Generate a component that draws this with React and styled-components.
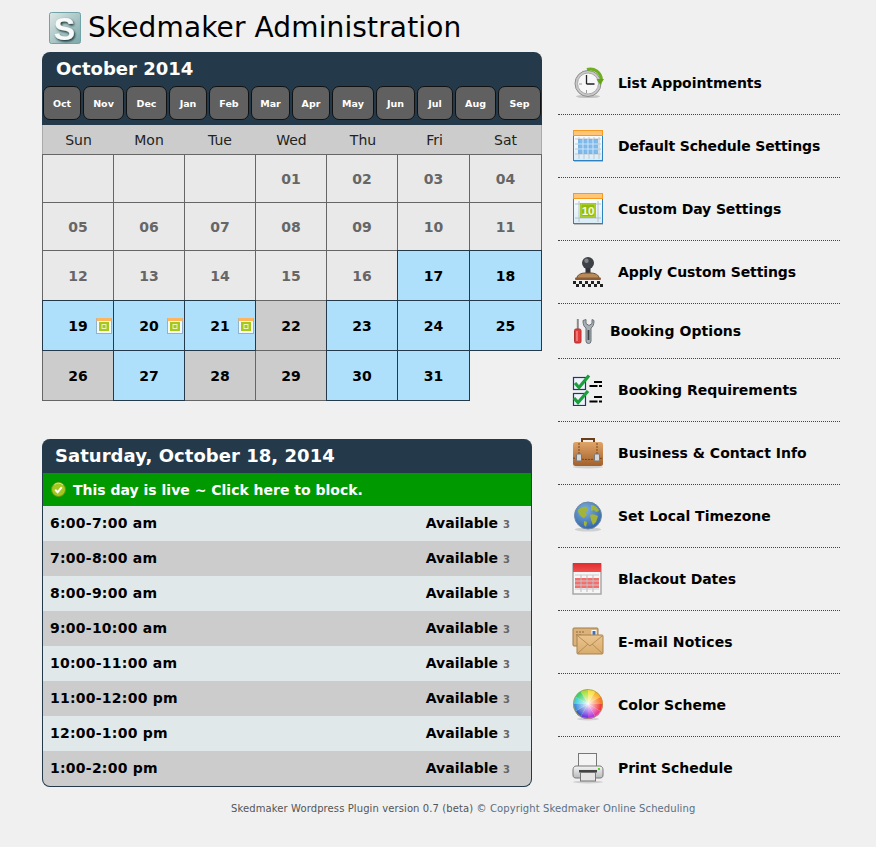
import React from "react";
import styled, { createGlobalStyle } from "styled-components";

const Global = createGlobalStyle`
  html, body { margin: 0; padding: 0; background: #f0f0f0; }
  body { font-family: "DejaVu Sans", Verdana, sans-serif; color: #000; }
`;
const Page = styled.div`
  width: 876px; height: 847px; box-sizing: border-box; padding: 9px 0 0 42px; overflow: hidden;
`;
const Columns = styled.div`display: flex; align-items: flex-start;`;
const LeftColumn = styled.div`width: 500px;`;
const TitleBar = styled.div`display: flex; align-items: center; gap: 7px; padding-left: 7px; height: 37px; margin-bottom: 6px;`;
const TitleText = styled.h1`margin: 0; font-size: 28px; font-weight: 400; line-height: 37px; color: #000; letter-spacing: .13px;`;
const Calendar = styled.div`width: 500px;`;
const CalendarHead = styled.div`
  background: #243a4a; border-radius: 8px 8px 0 0; height: 73px; box-sizing: border-box; padding: 6px 1px 0 1px;
`;
const MonthTitle = styled.div`
  font-size: 18px; font-weight: 700; color: #fff; line-height: 22px; padding-left: 13px; height: 28px;
`;
const MonthRow = styled.div`display: flex; gap: 2px;`;
const MonthButton = styled.div`
  width: ${p => p.$w}px; height: 34px; box-sizing: border-box; flex: none;
  background: #606060; border: 1px solid #111; border-radius: 7px;
  color: #fff; font-size: 9.5px; font-weight: 700; display: flex; align-items: center; justify-content: center;
`;
const WeekRow = styled.div`
  display: grid; grid-template-columns: 71px 70px 72px 71px 72px 71px 71px; height: 29px;
  background: #ccc; border-left: 1px solid #aaa; border-right: 1px solid #aaa; box-sizing: border-box;
  width: 500px;
`;
const WeekDay = styled.div`
  font-size: 14px; color: #222; display: flex; align-items: center; justify-content: center; height: 29px;
`;
const DayGrid = styled.div`
  display: grid; grid-template-columns: 71px 71px 71px 71px 71px 72px 72px; width: 500px;
`;
const Day = styled.div`
  position: relative; box-sizing: border-box; height: ${p => p.$h + 1}px; margin: 0 -1px -1px 0;
  border: 1px solid ${p => (p.$kind === "open" ? "#243a4a" : p.$kind === "none" ? "transparent" : "#666")};
  background: ${p => (p.$kind === "open" ? "#aee0fc" : p.$kind === "full" ? "#ccc" : p.$kind === "none" ? "transparent" : "#e9e9e9")};
  color: ${p => (p.$kind === "past" ? "#666" : "#000")};
  font-size: 14px; font-weight: 700; display: flex; align-items: center; justify-content: center;
  z-index: ${p => (p.$kind === "open" ? 1 : 0)};
`;
const DayBadge = styled.span`position: absolute; right: 1px; top: 17px; display: flex;`;
const Schedule = styled.div`
  width: 490px; margin-top: 39px; border: 1px solid #243a4a; border-top: 0; box-sizing: border-box;
  border-radius: 8px; overflow: hidden; background: #243a4a;
`;
const ScheduleHead = styled.div`
  height: 34px; color: #fff; font-size: 18px; font-weight: 700; line-height: 33px; padding-left: 12px; letter-spacing: .04px;
`;
const LiveBar = styled.div`
  height: 33px; background: #009900; color: #fff; font-size: 14px; font-weight: 700;
  display: flex; align-items: center; gap: 7px; padding-left: 8px;
`;
const Slot = styled.div`
  height: 35px; display: flex; align-items: center; justify-content: space-between; box-sizing: border-box;
  padding: 0 21px 2px 7px; background: ${p => (p.$alt ? "#ccc" : "#e0e8ea")};
  font-size: 14px; font-weight: 700; color: #000;
`;
const SlotTime = styled.span`letter-spacing: .25px;`;
const Count = styled.span`font-size: 10px; color: #666; margin-left: 5px;`;
const Footer = styled.div`
  width: 466px; margin: 15px 0 0 189px; font-size: 10px; color: #555; white-space: nowrap; line-height: 14px; letter-spacing: .1px;
`;
const FooterLink = styled.span`color: #5a6f82;`;
const Menu = styled.nav`width: 282px; margin-left: 16px; padding-top: 43px;`;
const MenuItem = styled.div`
  height: ${p => p.$h}px; box-sizing: border-box; border-bottom: 1px dotted ${p => (p.$last ? "transparent" : "#444")};
  display: flex; align-items: center; gap: ${p => (p.$small ? 13 : 14)}px; padding-left: 14px;
  font-size: 14px; font-weight: 700; color: #000; letter-spacing: ${p => p.$ls || 0}px;
`;
const IconBox = styled.span`
  width: ${p => p.$w || 32}px; height: 32px; flex: none; display: flex; align-items: center; justify-content: center;
`;

const Ico = ({ children, w = 32, h = 32, vb }) => (
  <svg width={w} height={h} viewBox={vb || `0 0 ${w} ${h}`} xmlns="http://www.w3.org/2000/svg">{children}</svg>
);

const LogoIcon = () => (
  <Ico>
    <defs>
      <linearGradient id="lg" x1="0" y1="0" x2="1" y2="1"><stop offset="0" stopColor="#dfe8e6" /><stop offset="1" stopColor="#7aa6a8" /></linearGradient>
      <filter id="ls" x="-30%" y="-30%" width="160%" height="160%"><feDropShadow dx="1" dy="1.5" stdDeviation="1.1" floodColor="#082a2e" floodOpacity="1" /></filter>
    </defs>
    <rect x=".5" y=".5" width="31" height="31" rx="2" fill="url(#lg)" stroke="#6fa3a6" />
    <text x="15.5" y="27.5" fontFamily="Liberation Sans" fontWeight="700" fontSize="32" textAnchor="middle" fill="#f6fbfa" filter="url(#ls)">S</text>
  </Ico>
);
const CalBase = ({ id, children }) => (
  <>
    <defs><linearGradient id={id} x1="0" y1="0" x2="0" y2="1"><stop offset="0" stopColor="#ffffff" /><stop offset="1" stopColor="#d8ecf8" /></linearGradient></defs>
    <rect x="1.5" y="1.5" width="29" height="29" fill={`url(#${id})`} stroke="#2f82c0" />
    <rect x="2" y="31" width="29" height="1" fill="#bbb" />
    <rect x="1.5" y=".5" width="29" height="5" fill="#ffc67a" stroke="#f79a1e" />
    {children}
  </>
);
const CalendarSmall = () => (
  <Ico w={16} h={16} vb="0 0 32 32">
    <rect x="1" y="1" width="30" height="30" fill="#f4f8fb" stroke="#8fb4cc" strokeWidth="2" />
    <rect x="1" y="0" width="30" height="6" fill="#ffb45e" />
    <rect x="6" y="8" width="20" height="18" fill="#a6c81a" />
    <rect x="12" y="13" width="8" height="8" fill="none" stroke="#e9f4b8" strokeWidth="2" />
  </Ico>
);
const CheckBadge = () => (
  <Ico w={15} h={15}>
    <circle cx="7.5" cy="7.5" r="7" fill="#a4c81e" stroke="#6f9410" />
    <path d="M3.5 2.5A7 7 0 0 1 12 3" stroke="#d8ea90" fill="none" />
    <path d="M4.2 7.8l2.4 2.4 4.2-5" stroke="#fff" strokeWidth="2" fill="none" />
  </Ico>
);
const Clock = () => (
  <Ico>
    <ellipse cx="16" cy="29.5" rx="12" ry="1.6" fill="#c4c4c4" />
    <circle cx="16" cy="16.5" r="13" fill="#c9c9c9" stroke="#8d8d8d" />
    <circle cx="16" cy="16.5" r="10.5" fill="#f7f7f7" stroke="#aaa" />
    <path d="M14.5 8v9M14.5 17H22.5" stroke="#222" strokeWidth="1.3" fill="none" />
    <path d="M7 17h3M14.5 23v3" stroke="#999" />
    <path d="M15 2.5C22 .5 29 5 29.5 13" fill="none" stroke="#6fae1e" strokeWidth="3" />
    <path d="M24.5 12h7.5l-3.7 6z" fill="#62a414" />
  </Ico>
);
const CalGrid = () => (
  <Ico>
    <CalBase id="cg">
      {[7, 12, 17, 22, 27].map(x => <path key={x} d={`M${x} 7v22`} stroke="#c0c8d0" />)}
      {[9, 14, 19, 24].map(y => <path key={y} d={`M3 ${y}H29`} stroke="#c0c8d0" />)}
      <rect x="6" y="9" width="20" height="15" fill="#64abea" opacity=".8" />
      {[11, 16, 21].map(x => <path key={x} d={`M${x} 9v15`} stroke="#d0e6f8" />)}
      {[14, 19].map(y => <path key={y} d={`M6 ${y}H26`} stroke="#d0e6f8" />)}
    </CalBase>
  </Ico>
);
const CalTen = () => (
  <Ico>
    <CalBase id="ct">
      <path d="M7 8v21M26 8v21M3 11H29M3 25H29" stroke="#b8c2c8" />
      <rect x="8" y="10" width="16" height="15" fill="#95bd07" />
      <rect x="9" y="11" width="14" height="13" fill="none" stroke="#b6d648" />
      <text x="16" y="22" textAnchor="middle" fontFamily="Liberation Sans" fontSize="11.5" fill="#f6fcd8">10</text>
    </CalBase>
  </Ico>
);
const Stamp = () => (
  <Ico>
    <circle cx="16" cy="7" r="6" fill="#3d4146" />
    <circle cx="14.5" cy="4.8" r="2.2" fill="#80858c" />
    <rect x="13.5" y="12" width="5" height="6" fill="#30343a" />
    <path d="M5 22c0-3 4-5 8-5h6c4 0 8 2 8 5v1H5z" fill="#b98a5a" stroke="#6d4a28" />
    <rect x="3" y="21.5" width="26" height="2.5" rx="1" fill="#8a5d33" />
    <g fill="#222">
      {[1, 7, 13, 19, 25].map(x => <rect key={x} x={x} y="25" width="3" height="3" />)}
      {[4, 10, 16, 22, 28].map(x => <rect key={x} x={x} y="28" width="3" height="3" />)}
    </g>
  </Ico>
);
const Tools = () => (
  <Ico w={24} h={26}>
    <rect x="3.8" y="1" width="2" height="11" fill="#8a8a8a" />
    <rect x="1.5" y="11" width="6.5" height="14" rx="1.5" fill="#e53b3b" stroke="#b03030" />
    <rect x="3.2" y="13" width="1.5" height="10" fill="#f38a8a" />
    <path d="M10 2.5c0 4 1 6.5 3 7.5v13a2.5 2.5 0 0 0 5 0V10c2-1 3-3.5 3-7.5l-2-1v4l-3 2-3-2v-4z" fill="#a7aeb4" stroke="#6a7278" />
    <rect x="14.6" y="12" width="1.8" height="10" fill="#3b4248" />
  </Ico>
);
const Checks = () => (
  <Ico>
    <rect x="1.5" y="3.5" width="12" height="12" fill="#eef3fa" stroke="#143a78" strokeWidth="1.2" />
    <rect x="1.5" y="19.5" width="12" height="12" fill="#eef3fa" stroke="#143a78" strokeWidth="1.2" />
    <path d="M3 9l4 4.5L17 1.5" stroke="#1d9e3c" strokeWidth="3.2" fill="none" />
    <path d="M2 24l4 4.5L16 17" stroke="#1d9e3c" strokeWidth="3.2" fill="none" />
    <path d="M22 8h8M17.5 12h8M27 12h3M22 23h8M17.5 27.5h8M27 27.5h3" stroke="#000" strokeWidth="2" />
  </Ico>
);
const Briefcase = () => (
  <Ico>
    <defs><linearGradient id="bc" x1="0" y1="0" x2="0" y2="1"><stop offset="0" stopColor="#e0a468" /><stop offset="1" stopColor="#a2602a" /></linearGradient></defs>
    <ellipse cx="16" cy="30" rx="15" ry="1.5" fill="#d0d0d0" />
    <path d="M10 6V2h12v4" fill="none" stroke="#6b3e18" strokeWidth="2" />
    <rect x="1" y="5" width="30" height="24" rx="2.5" fill="url(#bc)" />
    <path d="M7 6v12M25 6v12M1 21c10 2 20 2 30 0" stroke="#77441b" fill="none" strokeDasharray="2 1" />
    <rect x="4.5" y="17" width="5" height="7" rx="1" fill="#d4d6d8" stroke="#777" />
    <rect x="22.5" y="17" width="5" height="7" rx="1" fill="#d4d6d8" stroke="#777" />
  </Ico>
);
const Globe = () => (
  <Ico>
    <defs><radialGradient id="gb" cx=".4" cy=".3" r=".8"><stop offset="0" stopColor="#7fb0e0" /><stop offset="1" stopColor="#2a5d9e" /></radialGradient></defs>
    <ellipse cx="16" cy="29.5" rx="13" ry="2" fill="#d0d0d0" />
    <circle cx="16" cy="15.5" r="13.5" fill="url(#gb)" stroke="#6a88a8" />
    <path d="M6 10c3-3 6-4 9-3l1 3-3 2 2 3-3 3c-3-1-6-4-6-8zM19 5c3 0 7 2 8 6l-3 1-2-2-3 1zM18 15c3-2 6 0 8 1l-2 6-3 3-2-5z" fill="#a2b53a" />
    <path d="M12 21l3 1-1 5-2-2z" fill="#a2b53a" />
  </Ico>
);
const Blackout = () => (
  <Ico>
    <defs><linearGradient id="bo" x1="0" y1="0" x2="0" y2="1"><stop offset="0" stopColor="#e02c2c" /><stop offset="1" stopColor="#f05050" /></linearGradient></defs>
    <rect x="1" y="1" width="28" height="30" fill="#f6f6f6" stroke="#a8a8a8" strokeWidth="1.5" />
    <rect x="1" y="0" width="28" height="9" fill="url(#bo)" />
    <rect x="3" y="15" width="24" height="10" fill="#f46e6e" />
    {[9, 15, 21].map(x => <path key={x} d={`M${x} 12v17`} stroke="#bbb" />)}
    {[12, 18, 22, 26].map(y => <path key={y} d={`M3 ${y}H27`} stroke="#ccc" />)}
  </Ico>
);
const Mail = () => (
  <Ico>
    <defs><linearGradient id="ml" x1="0" y1="0" x2="0" y2="1"><stop offset="0" stopColor="#ecc48e" /><stop offset="1" stopColor="#d8ac6c" /></linearGradient></defs>
    <rect x="1" y="2" width="25" height="18" rx="1" fill="#dcb27a" stroke="#a07a48" />
    <rect x="20" y="4.5" width="4" height="5" fill="#3a72c0" stroke="#fff" />
    <path d="M4 6h8M4 9h6" stroke="#8a6a40" strokeDasharray="2 1" />
    <rect x="5" y="9" width="26" height="19" rx="1" fill="url(#ml)" stroke="#a8824c" />
    <path d="M6 10l12 10 12-10M6 27l10-9M30 27l-10-9" fill="none" stroke="#b48e58" />
  </Ico>
);
const Wheel = () => {
  const colors = ["#f6e23a", "#fcb22a", "#f87c2a", "#f23a3a", "#e83a96", "#b23ae0", "#6e3ae0", "#3a5cc8", "#3a8ce0", "#3ad0d8", "#3ad06a", "#a2e03a"];
  return (
    <Ico>
      <defs><radialGradient id="wh"><stop offset="0" stopColor="#fff" stopOpacity=".95" /><stop offset="1" stopColor="#fff" stopOpacity="0" /></radialGradient></defs>
      <ellipse cx="16" cy="30" rx="11" ry="1.5" fill="#d0d0d0" />
      {colors.map((c, i) => {
        const a = (i * 30 - 90) * Math.PI / 180, b = ((i + 1) * 30 - 90) * Math.PI / 180;
        return <path key={c} d={`M16 15L${16 + 15 * Math.cos(a)} ${15 + 15 * Math.sin(a)}A15 15 0 0 1 ${16 + 15 * Math.cos(b)} ${15 + 15 * Math.sin(b)}Z`} fill={c} />;
      })}
      <circle cx="16" cy="15" r="13" fill="url(#wh)" />
      <circle cx="16" cy="15" r="14.5" fill="none" stroke="#b09a50" strokeWidth=".8" />
    </Ico>
  );
};
const Printer = () => (
  <Ico>
    <defs><linearGradient id="pr" x1="0" y1="0" x2="0" y2="1"><stop offset="0" stopColor="#f4f4f4" /><stop offset="1" stopColor="#b8babc" /></linearGradient></defs>
    <ellipse cx="16" cy="30" rx="15" ry="1.5" fill="#d0d0d0" />
    <rect x="6.5" y="1.5" width="18" height="15" fill="#f4f4f4" stroke="#777" />
    <path d="M4 14h24c2 0 3 2 3 4v5c0 2-1 3-3 3H4c-2 0-3-1-3-3v-5c0-2 1-4 3-4z" fill="url(#pr)" stroke="#777" />
    <rect x="7" y="18" width="18" height="2.5" fill="#444" />
    <rect x="8.5" y="20.5" width="15" height="8.5" fill="#e4e4e4" stroke="#777" />
    <rect x="26" y="16" width="2" height="2" fill="#5ad02a" />
  </Ico>
);

const months = [["Oct", 38], ["Nov", 41], ["Dec", 41], ["Jan", 38], ["Feb", 40], ["Mar", 39], ["Apr", 38], ["May", 42], ["Jun", 39], ["Jul", 36], ["Aug", 41], ["Sep", 43]];
const weekDays = ["Sun", "Mon", "Tue", "Wed", "Thu", "Fri", "Sat"];
const rows = [
  { h: 48, days: [["", "past"], ["", "past"], ["", "past"], ["01", "past"], ["02", "past"], ["03", "past"], ["04", "past"]] },
  { h: 48, days: [["05", "past"], ["06", "past"], ["07", "past"], ["08", "past"], ["09", "past"], ["10", "past"], ["11", "past"]] },
  { h: 50, days: [["12", "past"], ["13", "past"], ["14", "past"], ["15", "past"], ["16", "past"], ["17", "open"], ["18", "open"]] },
  { h: 50, days: [["19", "open", 1], ["20", "open", 1], ["21", "open", 1], ["22", "full"], ["23", "open"], ["24", "open"], ["25", "open"]] },
  { h: 50, days: [["26", "full"], ["27", "open"], ["28", "full"], ["29", "full"], ["30", "open"], ["31", "open"], ["", "none"]] },
];
const slots = ["6:00-7:00 am", "7:00-8:00 am", "8:00-9:00 am", "9:00-10:00 am", "10:00-11:00 am", "11:00-12:00 pm", "12:00-1:00 pm", "1:00-2:00 pm"];
const menu = [
  { label: "List Appointments", Icon: Clock, h: 63, ls: -0.05 },
  { label: "Default Schedule Settings", Icon: CalGrid, h: 63, ls: -0.16 },
  { label: "Custom Day Settings", Icon: CalTen, h: 63, ls: -0.1 },
  { label: "Apply Custom Settings", Icon: Stamp, h: 63, ls: -0.1 },
  { label: "Booking Options", Icon: Tools, h: 55, small: true, ls: 0.07 },
  { label: "Booking Requirements", Icon: Checks, h: 63 },
  { label: "Business & Contact Info", Icon: Briefcase, h: 63 },
  { label: "Set Local Timezone", Icon: Globe, h: 63 },
  { label: "Blackout Dates", Icon: Blackout, h: 63, ls: -0.07 },
  { label: "E-mail Notices", Icon: Mail, h: 63, ls: 0.14 },
  { label: "Color Scheme", Icon: Wheel, h: 63 },
  { label: "Print Schedule", Icon: Printer, h: 63, ls: -0.07 },
];

export default function App() {
  return (
    <Page>
      <Global />
      <Columns>
        <LeftColumn>
          <TitleBar><LogoIcon /><TitleText>Skedmaker Administration</TitleText></TitleBar>
          <Calendar>
            <CalendarHead>
              <MonthTitle>October 2014</MonthTitle>
              <MonthRow>{months.map(([m, w]) => <MonthButton key={m} $w={w}>{m}</MonthButton>)}</MonthRow>
            </CalendarHead>
            <WeekRow>{weekDays.map(d => <WeekDay key={d}>{d}</WeekDay>)}</WeekRow>
            <DayGrid>
              {rows.flatMap((r, i) => r.days.map(([n, k, badge], j) => (
                <Day key={`${i}-${j}`} $h={r.h} $kind={k}>
                  {n}
                  {badge ? <DayBadge><CalendarSmall /></DayBadge> : null}
                </Day>
              )))}
            </DayGrid>
          </Calendar>
          <Schedule>
            <ScheduleHead>Saturday, October 18, 2014</ScheduleHead>
            <LiveBar><CheckBadge />This day is live ~ Click here to block.</LiveBar>
            {slots.map((s, i) => (
              <Slot key={s} $alt={i % 2 === 1}>
                <SlotTime>{s}</SlotTime>
                <span>Available<Count>3</Count></span>
              </Slot>
            ))}
          </Schedule>
          <Footer>Skedmaker Wordpress Plugin version 0.7 (beta) © <FooterLink>Copyright Skedmaker Online Scheduling</FooterLink></Footer>
        </LeftColumn>
        <Menu>
          {menu.map(({ label, Icon, h, small, ls }, i) => (
            <MenuItem key={label} $h={h} $small={small} $ls={ls} $last={i === menu.length - 1}>
              <IconBox $w={small ? 25 : 32}><Icon /></IconBox>
              {label}
            </MenuItem>
          ))}
        </Menu>
      </Columns>
    </Page>
  );
}
